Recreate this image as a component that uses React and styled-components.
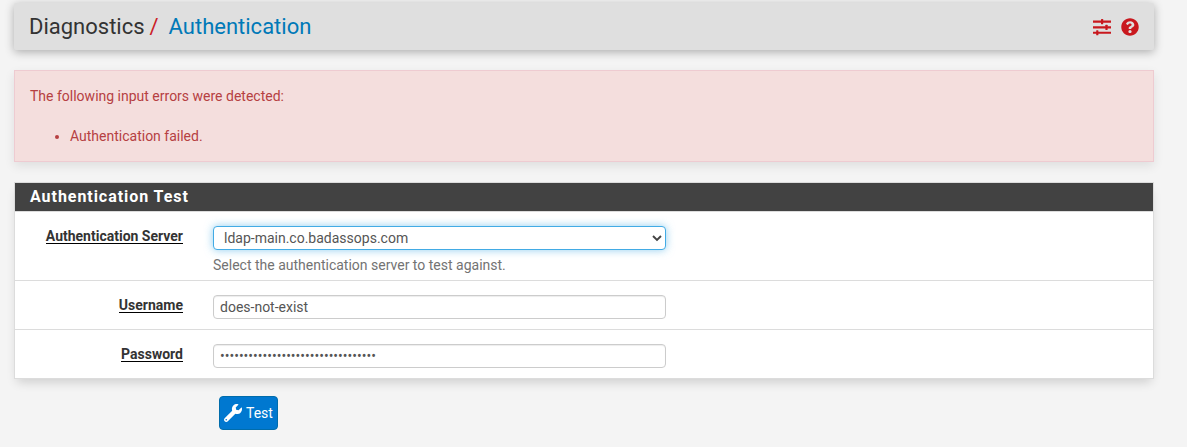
import React from "react";
import styled, { createGlobalStyle, css } from "styled-components";
import { FaQuestionCircle, FaWrench } from "react-icons/fa";

const GlobalStyle = createGlobalStyle`
  *, *::before, *::after { box-sizing: border-box; }
  body {
    margin: 0;
    background: #f4f4f4;
    color: #333;
    font-family: Roboto, "Liberation Sans", sans-serif;
    font-size: 14px;
    line-height: 20px;
  }
`;

const Page = styled.main`
  width: 1140px;
  min-height: 447px;
  margin-left: 14px;
  padding-top: 3px;
`;

const Header = styled.header`
  display: flex;
  align-items: center;
  justify-content: space-between;
  height: 47px;
  padding: 0 15px;
  background: #dfdfdf;
  border-radius: 2px;
  box-shadow: 0 2px 10px rgba(0, 0, 0, 0.3);
`;

const Breadcrumb = styled.h1`
  display: flex;
  margin: 0;
  font-size: 22px;
  font-weight: 400;
  line-height: 24px;
`;

const Separator = styled.span`
  width: 19px;
  padding-left: 5px;
  color: #cb2026;
`;

const Current = styled.a`
  margin-left: 5px;
  color: #0079b8;
`;

const Actions = styled.div`
  display: flex;
  align-items: center;
  gap: 10px;
  color: #c9181e;

  svg { display: block; }
`;

const Alert = styled.section`
  height: 92px;
  margin-top: 20px;
  padding: 15px;
  background: #f4dedd;
  border: 1px solid #eecbd1;
  color: #b64042;
  box-shadow: 0 4px 10px rgba(0, 0, 0, 0.09);
`;

const AlertText = styled.p`
  margin: 0 0 20px;
`;

const AlertList = styled.ul`
  margin: 0;
  padding-left: 40px;
`;

const Panel = styled.section`
  margin-top: 20px;
  background: #fff;
  border: 1px solid #dcdcdc;
  box-shadow: 0 6px 10px -3px rgba(0, 0, 0, 0.16);
`;

const PanelTitle = styled.h2`
  height: 28px;
  margin: 0;
  padding-left: 15px;
  background: #424242;
  color: #fff;
  font-size: 16px;
  font-weight: 700;
  line-height: 27px;
  letter-spacing: 0.95px;
`;

const Row = styled.div`
  display: grid;
  grid-template-columns: 168px 453px;
  column-gap: 30px;
  height: ${(p) => (p.$tall ? 69 : 49)}px;
  padding-top: 14px;
  border-top: 1px solid #dcdcdc;
`;

const Label = styled.label`
  justify-self: end;
  align-self: start;
  margin-top: 4px;
  border-bottom: 1px solid #000;
  font-weight: 700;
  line-height: 13px;
`;

const control = css`
  display: block;
  width: 453px;
  height: 24px;
  margin: 0;
  border: 1px solid #ccc;
  border-radius: 4px;
  background: #fff;
  color: #555;
  font: 400 14px/20px Roboto, "Liberation Sans", sans-serif;
  outline: none;
`;

const Input = styled.input`
  ${control}
  padding: 0 6px;
  box-shadow: inset 0 1px 1px rgba(0, 0, 0, 0.075);
`;

const SelectBox = styled.div`
  ${control}
  display: flex;
  align-items: center;
  justify-content: space-between;
  padding: 0 3px 0 10px;
  border-color: #42abe5;
  box-shadow: 0 0 8px rgba(66, 171, 229, 0.6);
`;

const Help = styled.p`
  margin: 5px 0 0;
  color: #737373;
`;

const TestButton = styled.button`
  display: flex;
  align-items: center;
  gap: 4px;
  width: 59px;
  height: 34px;
  margin: 17px 0 0 205px;
  padding: 0 4px;
  border: 1px solid #006cab;
  border-radius: 4px;
  background: #0078d0;
  color: #fff;
  font: 400 14px/20px Roboto, "Liberation Sans", sans-serif;
`;

const Sliders = () => (
  <svg width="18" height="18" viewBox="0 0 18 18" fill="currentColor" aria-hidden="true">
    <path d="M0 2.5h18v2.2H0zM0 8.2h18v2.2H0zM0 13.7h18v2.1H0z" />
    <rect x="8" y="1" width="2.2" height="5.3" rx=".5" />
    <rect x="12.4" y="6.7" width="2.2" height="5.3" rx=".5" />
    <rect x="3.2" y="12.2" width="2.2" height="5.1" rx=".5" />
  </svg>
);

const Chevron = () => (
  <svg width="10" height="8" viewBox="0 0 10 8" fill="none" stroke="#444" strokeWidth="1.9" aria-hidden="true">
    <path d="M1 2l4 4 4-4" />
  </svg>
);

export default function App() {
  return (
    <>
      <GlobalStyle />
      <Page>
        <Header>
          <Breadcrumb>
            Diagnostics<Separator>/</Separator>
            <Current>Authentication</Current>
          </Breadcrumb>
          <Actions>
            <Sliders />
            <FaQuestionCircle size={18} />
          </Actions>
        </Header>
        <Alert>
          <AlertText>The following input errors were detected:</AlertText>
          <AlertList>
            <li>Authentication failed.</li>
          </AlertList>
        </Alert>
        <Panel>
          <PanelTitle>Authentication Test</PanelTitle>
          <Row $tall>
            <Label>Authentication Server</Label>
            <div>
              <SelectBox role="combobox">
                ldap-main.co.badassops.com
                <Chevron />
              </SelectBox>
              <Help>Select the authentication server to test against.</Help>
            </div>
          </Row>
          <Row>
            <Label htmlFor="username">Username</Label>
            <Input id="username" defaultValue="does-not-exist" />
          </Row>
          <Row>
            <Label htmlFor="password">Password</Label>
            <Input id="password" type="password" defaultValue={"x".repeat(33)} />
          </Row>
        </Panel>
        <TestButton type="button">
          <FaWrench size={18} />
          Test
        </TestButton>
      </Page>
    </>
  );
}
